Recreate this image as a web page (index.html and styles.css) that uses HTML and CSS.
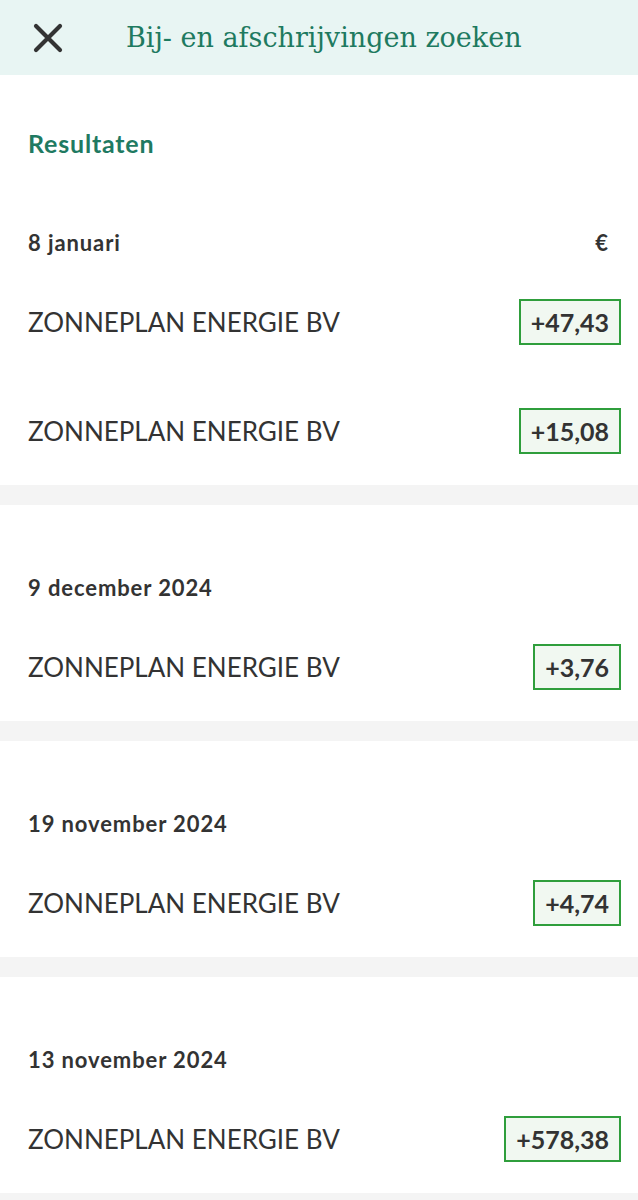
FILE: index.html
```html
<!DOCTYPE html>
<html>
<head>
<meta charset="UTF-8">
<title>Bij- en afschrijvingen zoeken</title>
<link rel="stylesheet" href="styles.css">
</head>
<body>

	<header class="topbar">
		<button class="close" type="button" aria-label="Sluiten">
			<svg width="32" height="32" viewBox="0 0 32 32">
				<path d="M4 4 L28 28 M28 4 L4 28" stroke="#333" stroke-width="4.2" stroke-linecap="round" fill="none"/>
			</svg>
		</button>
		<h1 class="title">Bij- en afschrijvingen zoeken</h1>
	</header>

	<h2 class="results">Resultaten</h2>

	<section class="day">
		<div class="day-head">
			<span>8 januari</span>
			<span>€</span>
		</div>
		<div class="row">
			<span class="name">ZONNEPLAN ENERGIE BV</span>
			<span class="amount">+47,43</span>
		</div>
		<div class="row">
			<span class="name">ZONNEPLAN ENERGIE BV</span>
			<span class="amount">+15,08</span>
		</div>
	</section>

	<section class="day">
		<div class="day-head">
			<span>9 december 2024</span>
		</div>
		<div class="row">
			<span class="name">ZONNEPLAN ENERGIE BV</span>
			<span class="amount">+3,76</span>
		</div>
	</section>

	<section class="day">
		<div class="day-head">
			<span>19 november 2024</span>
		</div>
		<div class="row">
			<span class="name">ZONNEPLAN ENERGIE BV</span>
			<span class="amount">+4,74</span>
		</div>
	</section>

	<section class="day">
		<div class="day-head">
			<span>13 november 2024</span>
		</div>
		<div class="row">
			<span class="name">ZONNEPLAN ENERGIE BV</span>
			<span class="amount">+578,38</span>
		</div>
	</section>

</body>
</html>
```

FILE: styles.css
```css
body {
	margin: 0;
	background: #f4f4f4;
	font-family: Lato, "Liberation Sans", sans-serif;
	color: #333;
}

.topbar {
	display: flex;
	align-items: center;
	height: 75px;
	background: #e8f5f3;
}

.close {
	display: flex;
	margin: 0 0 0 32px;
	padding: 0;
	border: none;
	background: none;
}

.title {
	margin: 0 0 0 62px;
	font-family: "DejaVu Serif", serif;
	font-weight: normal;
	font-size: 27px;
	color: #1e7a60;
}

.results {
	margin: 0;
	padding: 53px 28px 0;
	line-height: 30px;
	background: #fff;
	font-size: 25px;
	font-weight: bold;
	letter-spacing: 0.8px;
	color: #1f7a62;
}

.day {
	background: #fff;
	margin-bottom: 20px;
	padding: 71px 17px 0 28px;
}

.results + .day {
	padding-top: 73px;
}

.day-head {
	display: flex;
	justify-content: space-between;
	height: 24px;
	line-height: 24px;
	margin-bottom: 12px;
	font-size: 22px;
	font-weight: bold;
	letter-spacing: 0.9px;
	padding-right: 12px;
}

.row {
	display: flex;
	justify-content: space-between;
	align-items: center;
	height: 109px;
}

.name {
	font-size: 26px;
}

.amount {
	padding: 0 10px;
	height: 42px;
	line-height: 42px;
	border: 2px solid #2f9e3c;
	background: #f1f8f1;
	font-size: 25px;
	font-weight: bold;
}
```
